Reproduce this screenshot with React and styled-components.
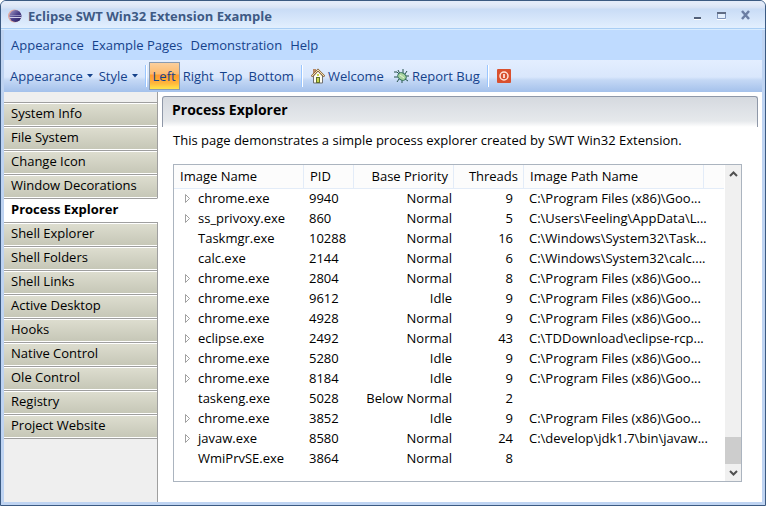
import React from "react";
import styled, { createGlobalStyle, css } from "styled-components";

const Global = createGlobalStyle`
  *, *::before, *::after { box-sizing: border-box; }
  html, body, #root { height: 100%; }
  body { margin: 0; background: #fff; color: #000; font: 13px/18px "Open Sans", "Noto Sans", sans-serif; overflow: hidden; }
  button { font: inherit; color: inherit; background: none; border: 0; padding: 0; margin: 0; cursor: default; }
  h1, h2, p, ul { margin: 0; padding: 0; font: inherit; }
  ul { list-style: none; }
`;

const Frame = styled.div`
  display: flex;
  flex-direction: column;
  height: 100%;
  border: 1px solid #3b5a82;
  border-radius: 6px 6px 0 0;
  background: #bfd4f2;
  overflow: hidden;
`;

const TitleBar = styled.header`
  display: flex;
  align-items: center;
  gap: 5px;
  flex: none;
  height: 29px;
  padding: 2px 10px 0 6px;
  border-bottom: 1px solid #d8ecff;
  box-shadow: inset 0 -1px #a9cef4;
  background: linear-gradient(#e3ebf9 0 3px, #d6e2f5 7px, #c9dcf6 8px, #e2effe 27px);
`;

const Title = styled.h1`
  flex: 1;
  color: #3e5a85;
  font-weight: 700;
  white-space: nowrap;
`;

const WindowButtons = styled.div`
  display: flex;
  gap: 5px;
  padding-bottom: 4px;
`;

const WindowButton = styled.button`
  display: flex;
`;

const Client = styled.div`
  display: flex;
  flex-direction: column;
  flex: 1;
  min-height: 0;
  margin: 0 3px 3px;
`;

const MenuBar = styled.nav`
  display: flex;
  align-items: center;
  flex: none;
  gap: 8px;
  height: 30px;
  padding: 0 7px;
  background: #bfdbff;
  color: #15428b;
`;

const ToolBar = styled.div`
  display: flex;
  align-items: center;
  flex: none;
  height: 32px;
  padding: 0 3px;
  background: linear-gradient(#e3eeff, #d9e7fc 17px, #c4d8f5 20px, #a4c1eb);
  color: #15428b;
`;

const ToolButton = styled.button`
  display: flex;
  align-items: center;
  gap: ${(p) => (p.$menu ? "4px" : "3px")};
  height: 28px;
  padding: 0 2px;
  border: 1px solid transparent;
  white-space: nowrap;
  ${(p) =>
    p.$active &&
    css`
      padding: 0 3px;
      border-color: #8a9bb0;
      background: linear-gradient(#fbcf9d, #fdbb6d 11px, #fe9a2e 12px, #ffb53c 20px, #ffe54a);
    `}
`;

const Separator = styled.span`
  width: 2px;
  height: 22px;
  margin: 0 2px 0 4px;
  border-left: 1px solid #9ac6ff;
  background: #fff;
`;

const IconTools = styled.div`
  display: flex;
  align-items: center;
  gap: 4px;
  padding-left: 3px;
`;

const Body = styled.div`
  display: flex;
  flex: 1;
  min-height: 0;
`;

const Sidebar = styled.ul`
  flex: none;
  width: 154px;
  padding-top: 10px;
  background: #efefef;
  box-shadow: inset -1px 0 #9f9f9f;
`;

const Tab = styled.button`
  display: block;
  width: 100%;
  height: 24px;
  padding: 0 7px 4px;
  text-align: left;
  border-top: 1px solid #9f9f9f;
  border-right: 1px solid #9f9f9f;
  background: linear-gradient(#deded0, #c5c6b6);
  box-shadow: inset 0 1px #fff, inset 0 -1px #fff;
  ${(p) =>
    p.$active &&
    css`
      background: #fff;
      border-right-color: #fff;
      font-weight: 700;
    `}
`;

const TabEnd = styled.li`
  border-top: 1px solid #9f9f9f;
`;

const Page = styled.main`
  display: flex;
  flex-direction: column;
  flex: 1;
  min-width: 0;
  padding: 4px 4px 20px;
  background: #fff;
`;

const PageTitle = styled.h2`
  flex: none;
  height: 31px;
  padding: 4px 9px;
  border: 1px solid #8f98a8;
  border-bottom: 0;
  border-radius: 3px 3px 0 0;
  background: linear-gradient(#d5d9df, #e6e9ec 24px, #fff);
  font-size: 14px;
  font-weight: 700;
`;

const Intro = styled.p`
  padding: 4px 11px 15px;
`;

const Tree = styled.div`
  display: flex;
  flex: 1;
  min-height: 0;
  margin: 0 16px 0 11px;
  border: 1px solid #abb4bf;
`;

const TableArea = styled.div`
  flex: 1;
  min-width: 0;
  overflow: hidden;
`;

const Table = styled.table`
  width: 100%;
  border-spacing: 0;
  table-layout: fixed;
`;

const Head = styled.th`
  width: ${(p) => p.$width};
  height: 24px;
  padding: 0 ${(p) => (p.$align ? "5px" : "0")} 2px 6px;
  border-right: 1px solid #e3ecf8;
  border-bottom: 1px solid #e3ecf8;
  background: #fcfcfc;
  font-weight: 400;
  text-align: ${(p) => p.$align || "left"};
  white-space: nowrap;
  &:last-child { border-right: 0; }
`;

const Cell = styled.td`
  height: 20px;
  padding: 0 ${(p) => p.$end || "2px"} 2px 5px;
  text-align: ${(p) => p.$align || "left"};
  white-space: nowrap;
`;

const Name = styled.span`
  display: flex;
  align-items: center;
  gap: 6px;
  padding-left: 4px;
`;

const Expander = styled.button`
  display: flex;
  width: 9px;
  height: 9px;
`;

const ScrollBar = styled.div`
  display: flex;
  flex-direction: column;
  flex: none;
  width: 17px;
  border-left: 1px solid #fff;
  background: #f0f0f0;
`;

const ScrollButton = styled.button`
  display: flex;
  align-items: center;
  justify-content: center;
  height: 17px;
`;

const Thumb = styled.div`
  height: 27px;
  margin-top: auto;
  background: #cdcdcd;
`;

const EclipseIcon = () => (
  <svg width="16" height="16" viewBox="0 0 16 16" aria-hidden="true">
    <defs>
      <linearGradient id="orb" x2="1" y2="1">
        <stop offset="0" stopColor="#a79cc8" />
        <stop offset="0.5" stopColor="#4b4189" />
        <stop offset="1" stopColor="#2a2060" />
      </linearGradient>
    </defs>
    <circle cx="7.500" cy="8" r="6.500" fill="#e0a9a0" />
    <circle cx="8.500" cy="8" r="6" fill="url(#orb)" />
    <path d="M2.500 7.500h12" stroke="#8f8abb" />
    <path d="M2.500 9.500h12" stroke="#d3d1ec" />
  </svg>
);

const CaretIcon = () => (
  <svg width="6" height="4" viewBox="0 0 6 4" aria-hidden="true">
    <path d="M0 0h6L3 3.500z" fill="#15428b" />
  </svg>
);

const HomeIcon = () => (
  <svg width="14" height="16" viewBox="0 0 14 16" aria-hidden="true">
    <path d="M2.500 8v7h9V8L7 3z" fill="#fffdf0" stroke="#707070" />
    <path d="M2 1h3v5H2z" fill="#b98a68" />
    <path d="M.5 8.500L7 2l6.500 6.500" fill="none" stroke="#8c6a3c" strokeWidth="2" />
    <path d="M1 8l6-6 6 6" fill="none" stroke="#f5dfae" strokeWidth="1" />
    <path d="M5 9h4v6H5z" fill="#60702f" />
    <path d="M6 6h2v2H6zM6 10h2v4H6z" fill="#c8d84a" />
  </svg>
);

const BugIcon = () => (
  <svg width="15" height="15" viewBox="0 0 15 15" aria-hidden="true">
    <path d="M4 1l2 4M9 0v4M0 3h3l2 2M0 8h4M3 13l2-3M8 14v-3M11 5l2-3M11 7h4M11 10l3 2" fill="none" stroke="#24504a" />
    <ellipse cx="8" cy="7.500" rx="4.500" ry="3.500" transform="rotate(35 8 7.500)" fill="#a9d5a0" stroke="#2d6a58" />
    <path d="M6 6l4 3" stroke="#e7f6d5" />
  </svg>
);

const PowerIcon = () => (
  <svg width="14" height="14" viewBox="0 0 14 14" aria-hidden="true">
    <rect width="14" height="14" rx="1" fill="#d9502e" />
    <circle cx="7" cy="7" r="4" fill="none" stroke="#ffe3d8" strokeWidth="1.500" />
    <path d="M7 5v4" stroke="#fff" strokeWidth="1.500" />
  </svg>
);

const MinimizeIcon = () => (
  <svg width="19" height="12" aria-hidden="true">
    <path d="M6 10h7" stroke="#526079" strokeWidth="2" />
    <path d="M6 11.500h7" stroke="#fff" />
  </svg>
);

const MaximizeIcon = () => (
  <svg width="19" height="12" aria-hidden="true">
    <path d="M5.500 4.500h8v6h-8z" fill="#e4effc" stroke="#7f93b8" />
    <path d="M5 5h9" stroke="#606c84" strokeWidth="2" />
    <path d="M5 11.500h9" stroke="#fff" />
  </svg>
);

const CloseIcon = () => (
  <svg width="19" height="12" aria-hidden="true">
    <path d="M6 3l7 8M13 3l-7 8" stroke="#6c7ea3" strokeWidth="2.500" />
  </svg>
);

const menus = ["Appearance", "Example Pages", "Demonstration", "Help"];
const tabs = [
  "System Info", "File System", "Change Icon", "Window Decorations", "Process Explorer",
  "Shell Explorer", "Shell Folders", "Shell Links", "Active Desktop", "Hooks",
  "Native Control", "Ole Control", "Registry", "Project Website",
];
const chromePath = "C:\\Program Files (x86)\\Goo...";
const rows = [
  [1, "chrome.exe", 9940, "Normal", 9, chromePath],
  [1, "ss_privoxy.exe", 860, "Normal", 5, "C:\\Users\\Feeling\\AppData\\L..."],
  [0, "Taskmgr.exe", 10288, "Normal", 16, "C:\\Windows\\System32\\Task..."],
  [0, "calc.exe", 2144, "Normal", 6, "C:\\Windows\\System32\\calc...."],
  [1, "chrome.exe", 2804, "Normal", 8, chromePath],
  [1, "chrome.exe", 9612, "Idle", 9, chromePath],
  [1, "chrome.exe", 4928, "Normal", 9, chromePath],
  [1, "eclipse.exe", 2492, "Normal", 43, "C:\\TDDownload\\eclipse-rcp..."],
  [1, "chrome.exe", 5280, "Idle", 9, chromePath],
  [1, "chrome.exe", 8184, "Idle", 9, chromePath],
  [0, "taskeng.exe", 5028, "Below Normal", 2, ""],
  [1, "chrome.exe", 3852, "Idle", 9, chromePath],
  [1, "javaw.exe", 8580, "Normal", 24, "C:\\develop\\jdk1.7\\bin\\javaw..."],
  [0, "WmiPrvSE.exe", 3864, "Normal", 8, ""],
];

export default function App() {
  return (
    <>
      <Global />
      <Frame>
        <TitleBar>
          <EclipseIcon />
          <Title>Eclipse SWT Win32 Extension Example</Title>
          <WindowButtons>
            <WindowButton aria-label="Minimize"><MinimizeIcon /></WindowButton>
            <WindowButton aria-label="Maximize"><MaximizeIcon /></WindowButton>
            <WindowButton aria-label="Close"><CloseIcon /></WindowButton>
          </WindowButtons>
        </TitleBar>
        <Client>
          <MenuBar>
            {menus.map((m) => <button key={m}>{m}</button>)}
          </MenuBar>
          <ToolBar role="toolbar">
            <ToolButton $menu>Appearance <CaretIcon /></ToolButton>
            <ToolButton $menu>Style <CaretIcon /></ToolButton>
            <Separator />
            <ToolButton $active aria-pressed="true">Left</ToolButton>
            <ToolButton>Right</ToolButton>
            <ToolButton>Top</ToolButton>
            <ToolButton>Bottom</ToolButton>
            <Separator />
            <IconTools>
              <ToolButton><HomeIcon />Welcome</ToolButton>
              <ToolButton><BugIcon />Report Bug</ToolButton>
            </IconTools>
            <Separator />
            <IconTools>
              <ToolButton aria-label="Exit"><PowerIcon /></ToolButton>
            </IconTools>
          </ToolBar>
          <Body>
            <Sidebar>
              {tabs.map((t) => (
                <li key={t}><Tab $active={t === "Process Explorer"}>{t}</Tab></li>
              ))}
              <TabEnd aria-hidden="true" />
            </Sidebar>
            <Page>
              <PageTitle>Process Explorer</PageTitle>
              <Intro>This page demonstrates a simple process explorer created by SWT Win32 Extension.</Intro>
              <Tree>
                <TableArea>
                  <Table>
                    <thead>
                      <tr>
                        <Head $width="130px">Image Name</Head>
                        <Head $width="50px">PID</Head>
                        <Head $width="100px" $align="right">Base Priority</Head>
                        <Head $width="70px" $align="right">Threads</Head>
                        <Head $width="180px">Image Path Name</Head>
                        <Head as="td" $width="auto" />
                      </tr>
                    </thead>
                    <tbody>
                      {rows.map(([open, name, pid, priority, threads, path]) => (
                        <tr key={pid}>
                          <Cell>
                            <Name>
                              <Expander as={open ? "button" : "span"} aria-label={open ? "Expand" : undefined}>
                                {open ? <svg width="9" height="9"><path d="M2.500.5v8l4-4z" fill="#fff" stroke="#a0a0a0" /></svg> : null}
                              </Expander>
                              {name}
                            </Name>
                          </Cell>
                          <Cell>{pid}</Cell>
                          <Cell $align="right">{priority}</Cell>
                          <Cell $align="right" $end="11px">{threads}</Cell>
                          <Cell>{path}</Cell>
                          <Cell />
                        </tr>
                      ))}
                    </tbody>
                  </Table>
                </TableArea>
                <ScrollBar>
                  <ScrollButton aria-label="Scroll up"><svg width="9" height="6"><path d="M1 5l3.500-3.500L8 5" fill="none" stroke="#505050" strokeWidth="2" /></svg></ScrollButton>
                  <Thumb />
                  <ScrollButton aria-label="Scroll down"><svg width="9" height="6"><path d="M1 1l3.500 3.500L8 1" fill="none" stroke="#505050" strokeWidth="2" /></svg></ScrollButton>
                </ScrollBar>
              </Tree>
            </Page>
          </Body>
        </Client>
      </Frame>
    </>
  );
}
